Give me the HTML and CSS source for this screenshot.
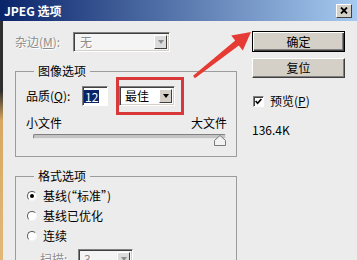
FILE: index.html
```html
<!DOCTYPE html>
<html>
<head>
  <title>JPEG 选项</title>
  <link rel="stylesheet" href="styles.css">
</head>
<body>

  <div class="window">
    <div class="titlebar">
      <span class="title">JPEG 选项</span>
      <span class="close">
        <svg width="8" height="7" viewBox="0 0 8 7"><path d="M1 0.5 L7 6.5 M7 0.5 L1 6.5" stroke="#000" stroke-width="1.8"/></svg>
      </span>
    </div>

    <div class="content">
      <div class="left">
        <div class="matte disabled">
          <span class="label">杂边(<u>M</u>):</span>
          <div class="select matte-select"><span class="value">无</span><span class="drop"><i></i></span></div>
        </div>

        <fieldset class="group image-group">
          <legend>图像选项</legend>
          <div class="quality">
            <span class="label">品质(<u>Q</u>):</span>
            <div class="field"><span class="selected">12</span></div>
            <div class="select quality-select"><span class="value">最佳</span><span class="drop"><i></i></span></div>
          </div>
          <div class="size-labels"><span>小文件</span><span>大文件</span></div>
          <div class="slider">
            <div class="track"></div>
            <svg class="thumb" width="12" height="11" viewBox="0 0 12 11"><polygon points="6,0.5 11.5,5.5 11.5,10.5 0.5,10.5 0.5,5.5" fill="#f2f2f2" stroke="#7a7a7a"/></svg>
          </div>
        </fieldset>

        <fieldset class="group format-group">
          <legend>格式选项</legend>
          <div class="radio-row"><span class="radio checked"></span>基线(“标准”)</div>
          <div class="radio-row"><span class="radio"></span>基线已优化</div>
          <div class="radio-row"><span class="radio"></span>连续</div>
          <div class="scans disabled">
            <span class="label">扫描:</span>
            <div class="select scans-select"><span class="value">3</span><span class="drop"><i></i></span></div>
          </div>
        </fieldset>
      </div>

      <div class="right">
        <button class="btn default">确定</button>
        <button class="btn reset">复位</button>
        <div class="preview">
          <span class="checkbox"><svg width="7" height="7" viewBox="0 0 7 7"><polyline points="0.6,3 2.6,5.2 6.4,1" fill="none" stroke="#000" stroke-width="1.7"/></svg></span>
          预览(<u>P</u>)
        </div>
        <div class="filesize">136.4K</div>
      </div>
    </div>

    <!-- annotation overlay -->
    <div class="highlight"></div>
    <svg class="arrow" viewBox="0 0 357 260">
      <polygon points="193.1,75.8 235.2,40.6 231.2,35.5 251,32 242.8,50.5 238.8,45.4 194.9,78.2" fill="#e63b35"/>
    </svg>
  </div>

</body>
</html>
```

FILE: styles.css
```css
body {
  margin: 0;
  font-family: "Noto Sans CJK SC", "Liberation Sans", sans-serif;
  font-size: 12px;
  line-height: 14px;
  color: #000;
}

.window {
  position: relative;
  width: 357px;
  height: 260px;
  overflow: hidden;
  background: #ececec;
}

.titlebar {
  height: 21px;
  display: flex;
  align-items: center;
  justify-content: space-between;
  padding: 0 5px 0 4px;
  background: linear-gradient(to right, #0a246a, #a6caf0);
}

.title {
  color: #fff;
  font-weight: bold;
}

.close {
  box-sizing: border-box;
  width: 16px;
  height: 14px;
  display: flex;
  align-items: center;
  justify-content: center;
  background: #d4d0c8;
  border: 1px solid;
  border-color: #fff #404040 #404040 #fff;
}

.content {
  display: flex;
  gap: 15px;
  height: 239px;
  box-sizing: border-box;
  padding: 10px 0 0 12px;
  border-left: 3px solid;
  border-image: linear-gradient(#2e2e2e, #2e2e2e 70px, #d8a862 100px, #e2b878) 1;
}

.left {
  width: 222px;
}

.disabled {
  color: #8d8d8d;
  text-shadow: 1px 1px 0 #fff;
}

.matte {
  display: flex;
  align-items: center;
  height: 20px;
  margin-top: 1px;
}

.matte .label {
  width: 58px;
}

.select {
  box-sizing: border-box;
  height: 20px;
  display: flex;
  align-items: center;
  justify-content: space-between;
  padding: 2px;
  background: #fff;
  border: 1px solid;
  border-color: #808080 #fff #fff #808080;
  box-shadow: inset 1px 1px #404040, inset -1px -1px #d4d0c8;
}

.select .value {
  padding-left: 3px;
}

.drop {
  box-sizing: border-box;
  width: 13px;
  height: 14px;
  display: flex;
  align-items: center;
  justify-content: center;
  background: #d4d0c8;
  border: 1px solid;
  border-color: #fff #404040 #404040 #fff;
}

.drop i {
  width: 0;
  height: 0;
  border-left: 3px solid transparent;
  border-right: 3px solid transparent;
  border-top: 4px solid #000;
}

.disabled .select {
  background: #f4f4f4;
}

.disabled .drop {
  background: #dcdcdc;
}

.disabled .drop i {
  border-top-color: #8d8d8d;
}

.matte-select {
  width: 97px;
}

.matte-select .value {
  padding-left: 4px;
}

.group {
  box-sizing: border-box;
  width: 222px;
  margin: 12px 0 0;
  border: 1px solid #9c9c9c;
}

.group legend {
  padding: 0 4px;
  margin-left: 8px;
  line-height: 14px;
}

.image-group {
  padding: 8px 9px 10px 10px;
}

.format-group {
  padding: 3px 9px 10px 10px;
}

.quality {
  display: flex;
  align-items: center;
  height: 20px;
}

.quality .label {
  width: 56px;
}

.field {
  box-sizing: border-box;
  width: 26px;
  height: 20px;
  display: flex;
  align-items: center;
  padding: 1px;
  background: #fff;
  border: 1px solid;
  border-color: #808080 #fff #fff #808080;
  box-shadow: inset 1px 1px #404040;
}

.selected {
  background: #0a246a;
  color: #fff;
  padding: 0 1px;
  line-height: 13px;
}

.quality-select {
  width: 56px;
  margin-left: 11px;
}

.size-labels {
  display: flex;
  justify-content: space-between;
  margin-top: 10px;
}

.slider {
  position: relative;
  height: 12px;
}

.track {
  box-sizing: border-box;
  width: 193px;
  height: 5px;
  margin: 4px 0 0 7px;
  border-radius: 2px;
  background: #c4c4c4;
  border: 1px solid;
  border-color: #808080 #e6e6e6 #e6e6e6 #808080;
}

.thumb {
  position: absolute;
  right: 1px;
  top: 1px;
}

.radio-row {
  display: flex;
  align-items: center;
  height: 20px;
}

.radio {
  position: relative;
  box-sizing: border-box;
  width: 10px;
  height: 10px;
  margin: 0 6px 0 1px;
  border-radius: 50%;
  background: #fff;
  border: 1px solid;
  border-color: #5a5a5a #f4f4f4 #f4f4f4 #5a5a5a;
}

.radio.checked::after {
  content: "";
  position: absolute;
  left: 2px;
  top: 2px;
  width: 4px;
  height: 4px;
  border-radius: 50%;
  background: #000;
}

.scans {
  display: flex;
  align-items: center;
  margin-top: 3px;
  padding-left: 14px;
}

.scans .label {
  width: 38px;
}

.scans-select {
  width: 55px;
}

.right {
  width: 93px;
  display: flex;
  flex-direction: column;
  align-items: flex-start;
}

.btn {
  box-sizing: border-box;
  width: 93px;
  height: 20px;
  padding: 0;
  font: inherit;
  color: #000;
  background: #d4d0c8;
  border: 1px solid;
  border-color: #fff #404040 #404040 #fff;
  box-shadow: inset -1px -1px #808080;
}

.btn.default {
  height: 21px;
  border-color: #000;
  box-shadow: inset 1px 1px #fff, inset -1px -1px #404040, inset -2px -2px #808080;
}

.btn.reset {
  margin-top: 6px;
}

.preview {
  display: flex;
  align-items: center;
  margin-top: 16px;
}

.checkbox {
  box-sizing: border-box;
  width: 11px;
  height: 11px;
  margin: 0 6px 0 1px;
  display: flex;
  align-items: center;
  justify-content: center;
  background: #fff;
  border: 1px solid;
  border-color: #808080 #fff #fff #808080;
  box-shadow: inset 1px 1px #404040;
}

.filesize {
  margin-top: 15px;
}

.highlight {
  position: absolute;
  left: 116px;
  top: 77px;
  width: 68px;
  height: 38px;
  box-sizing: border-box;
  border: 3px solid #d8383a;
}

.arrow {
  position: absolute;
  left: 0;
  top: 0;
  width: 357px;
  height: 260px;
}
```
